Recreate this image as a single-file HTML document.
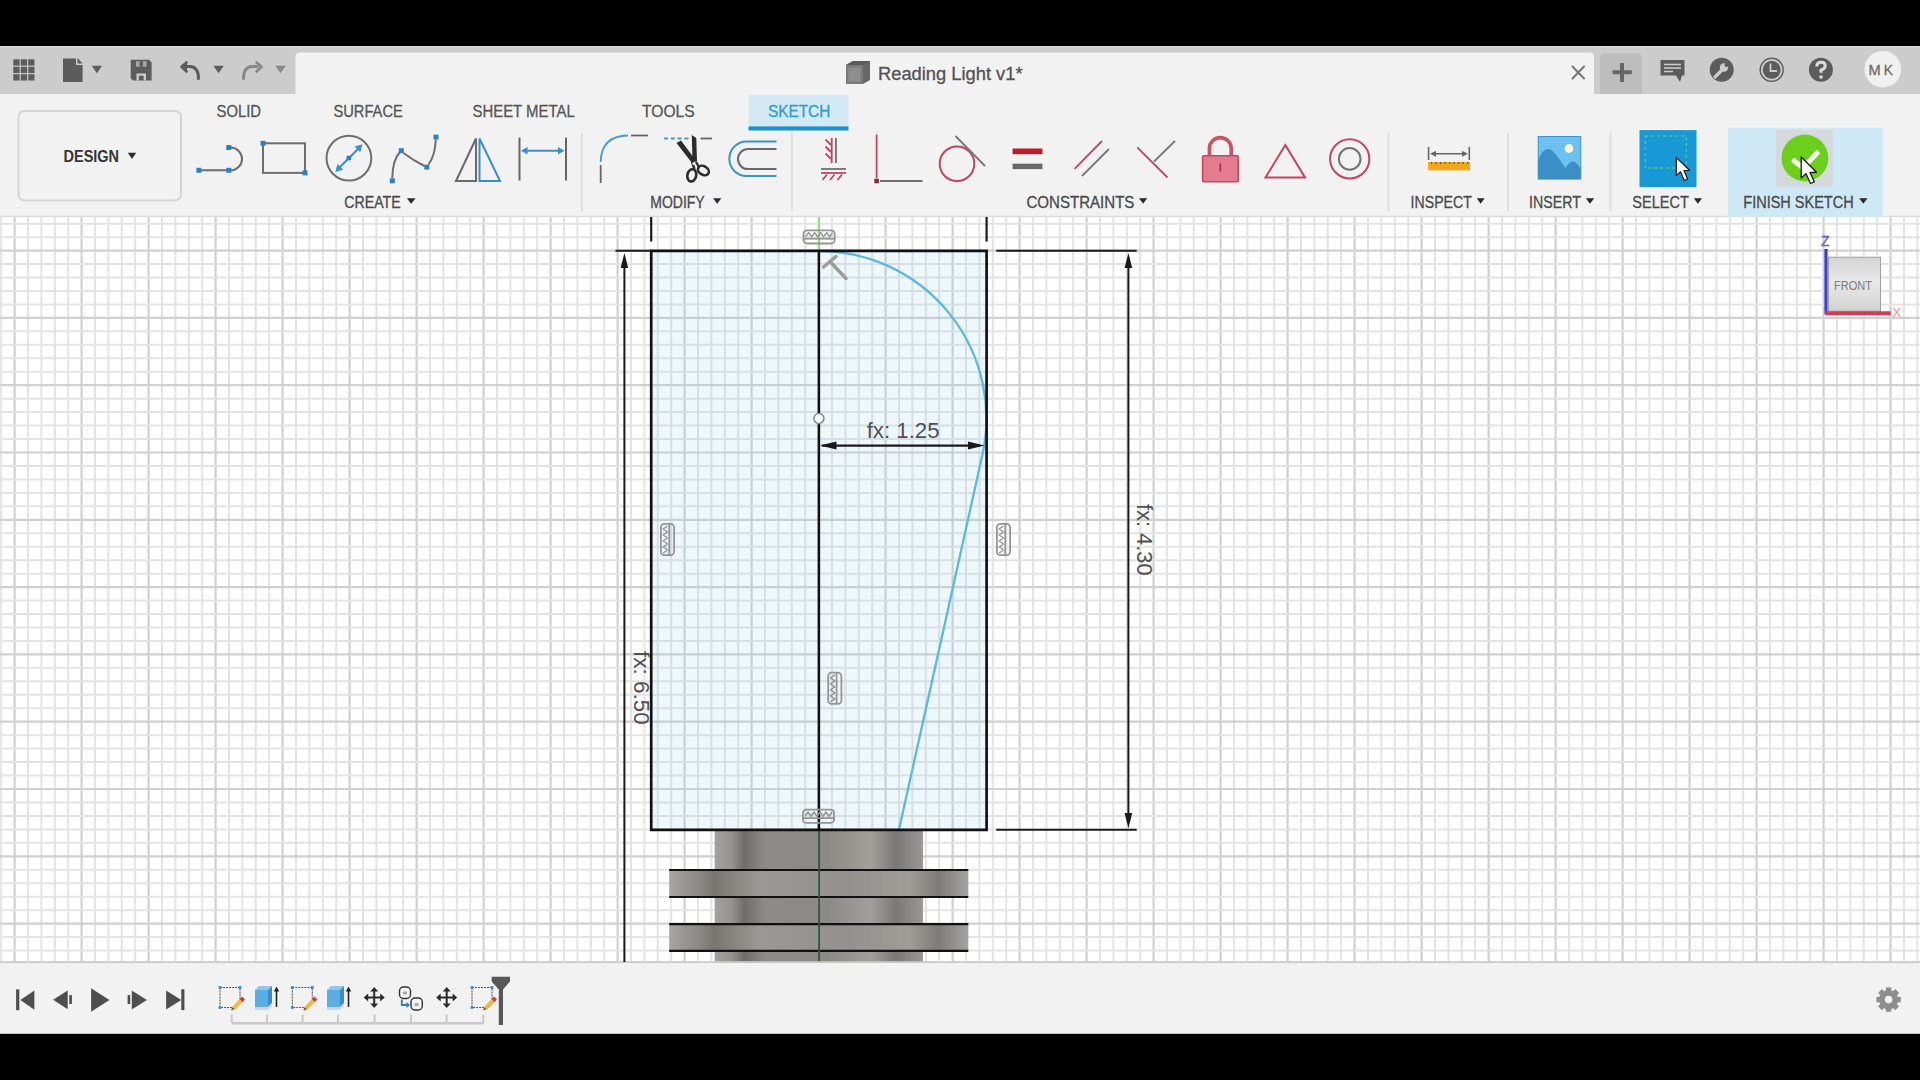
<!DOCTYPE html><html><head><meta charset="utf-8"><title>Fusion</title><style>html,body{margin:0;padding:0;width:1920px;height:1080px;overflow:hidden;background:#000}svg{display:block}text{font-family:"Liberation Sans",sans-serif}</style></head><body><svg width="1920" height="1080" viewBox="0 0 1920 1080"><defs><linearGradient id="gbody" x1="0" x2="1" y1="0" y2="0"><stop offset="0" stop-color="#a3a19d"/><stop offset="0.08" stop-color="#96948f"/><stop offset="0.14" stop-color="#6f6e6a"/><stop offset="0.24" stop-color="#8d8b87"/><stop offset="0.55" stop-color="#8c8a86"/><stop offset="0.75" stop-color="#a3a09b"/><stop offset="0.87" stop-color="#7a7975"/><stop offset="1" stop-color="#9a9894"/></linearGradient><linearGradient id="gring" x1="0" x2="1" y1="0" y2="0"><stop offset="0" stop-color="#a8a6a2"/><stop offset="0.1" stop-color="#8a8985"/><stop offset="0.15" stop-color="#77766f"/><stop offset="0.3" stop-color="#9a9894"/><stop offset="0.6" stop-color="#93918d"/><stop offset="0.8" stop-color="#a09d98"/><stop offset="0.9" stop-color="#7d7c78"/><stop offset="1" stop-color="#a5a39f"/></linearGradient><linearGradient id="gcube" x1="0" x2="0" y1="0" y2="1"><stop offset="0" stop-color="#d4d4d4"/><stop offset="0.45" stop-color="#e8e8e8"/><stop offset="1" stop-color="#d2d2d2"/></linearGradient></defs><rect x="0" y="0" width="1920" height="1080" fill="#f2f2f2"/><rect x="0" y="0" width="1920" height="46" fill="#000"/><rect x="0" y="46" width="1920" height="48" fill="#cccccc"/><rect x="0" y="46" width="1920" height="1.2" fill="#dadada"/><path d="M295.5,94 V57 Q295.5,52.5 300,52.5 H1589.5 Q1594,52.5 1594,57 V94 Z" fill="#f2f2f2"/><path d="M1600,94 V58 Q1600,53.5 1604.5,53.5 H1637.5 Q1642,53.5 1642,58 V94 Z" fill="#bdbdbd"/><rect x="0" y="215.8" width="1920" height="1.4" fill="#d9d9d9"/><rect x="0" y="217.2" width="1920" height="744.6" fill="#ffffff"/><line x1="1.20" y1="217.2" x2="1.20" y2="961.5" stroke="#e3e3e3" stroke-width="2.0"/><line x1="14.60" y1="217.2" x2="14.60" y2="961.5" stroke="#d0d0d0" stroke-width="2.2"/><line x1="28.00" y1="217.2" x2="28.00" y2="961.5" stroke="#e3e3e3" stroke-width="2.0"/><line x1="41.40" y1="217.2" x2="41.40" y2="961.5" stroke="#e3e3e3" stroke-width="2.0"/><line x1="54.80" y1="217.2" x2="54.80" y2="961.5" stroke="#e3e3e3" stroke-width="2.0"/><line x1="68.20" y1="217.2" x2="68.20" y2="961.5" stroke="#e3e3e3" stroke-width="2.0"/><line x1="81.60" y1="217.2" x2="81.60" y2="961.5" stroke="#d0d0d0" stroke-width="2.2"/><line x1="95.00" y1="217.2" x2="95.00" y2="961.5" stroke="#e3e3e3" stroke-width="2.0"/><line x1="108.40" y1="217.2" x2="108.40" y2="961.5" stroke="#e3e3e3" stroke-width="2.0"/><line x1="121.80" y1="217.2" x2="121.80" y2="961.5" stroke="#e3e3e3" stroke-width="2.0"/><line x1="135.20" y1="217.2" x2="135.20" y2="961.5" stroke="#e3e3e3" stroke-width="2.0"/><line x1="148.60" y1="217.2" x2="148.60" y2="961.5" stroke="#d0d0d0" stroke-width="2.2"/><line x1="162.00" y1="217.2" x2="162.00" y2="961.5" stroke="#e3e3e3" stroke-width="2.0"/><line x1="175.40" y1="217.2" x2="175.40" y2="961.5" stroke="#e3e3e3" stroke-width="2.0"/><line x1="188.80" y1="217.2" x2="188.80" y2="961.5" stroke="#e3e3e3" stroke-width="2.0"/><line x1="202.20" y1="217.2" x2="202.20" y2="961.5" stroke="#e3e3e3" stroke-width="2.0"/><line x1="215.60" y1="217.2" x2="215.60" y2="961.5" stroke="#d0d0d0" stroke-width="2.2"/><line x1="229.00" y1="217.2" x2="229.00" y2="961.5" stroke="#e3e3e3" stroke-width="2.0"/><line x1="242.40" y1="217.2" x2="242.40" y2="961.5" stroke="#e3e3e3" stroke-width="2.0"/><line x1="255.80" y1="217.2" x2="255.80" y2="961.5" stroke="#e3e3e3" stroke-width="2.0"/><line x1="269.20" y1="217.2" x2="269.20" y2="961.5" stroke="#e3e3e3" stroke-width="2.0"/><line x1="282.60" y1="217.2" x2="282.60" y2="961.5" stroke="#d0d0d0" stroke-width="2.2"/><line x1="296.00" y1="217.2" x2="296.00" y2="961.5" stroke="#e3e3e3" stroke-width="2.0"/><line x1="309.40" y1="217.2" x2="309.40" y2="961.5" stroke="#e3e3e3" stroke-width="2.0"/><line x1="322.80" y1="217.2" x2="322.80" y2="961.5" stroke="#e3e3e3" stroke-width="2.0"/><line x1="336.20" y1="217.2" x2="336.20" y2="961.5" stroke="#e3e3e3" stroke-width="2.0"/><line x1="349.60" y1="217.2" x2="349.60" y2="961.5" stroke="#d0d0d0" stroke-width="2.2"/><line x1="363.00" y1="217.2" x2="363.00" y2="961.5" stroke="#e3e3e3" stroke-width="2.0"/><line x1="376.40" y1="217.2" x2="376.40" y2="961.5" stroke="#e3e3e3" stroke-width="2.0"/><line x1="389.80" y1="217.2" x2="389.80" y2="961.5" stroke="#e3e3e3" stroke-width="2.0"/><line x1="403.20" y1="217.2" x2="403.20" y2="961.5" stroke="#e3e3e3" stroke-width="2.0"/><line x1="416.60" y1="217.2" x2="416.60" y2="961.5" stroke="#d0d0d0" stroke-width="2.2"/><line x1="430.00" y1="217.2" x2="430.00" y2="961.5" stroke="#e3e3e3" stroke-width="2.0"/><line x1="443.40" y1="217.2" x2="443.40" y2="961.5" stroke="#e3e3e3" stroke-width="2.0"/><line x1="456.80" y1="217.2" x2="456.80" y2="961.5" stroke="#e3e3e3" stroke-width="2.0"/><line x1="470.20" y1="217.2" x2="470.20" y2="961.5" stroke="#e3e3e3" stroke-width="2.0"/><line x1="483.60" y1="217.2" x2="483.60" y2="961.5" stroke="#d0d0d0" stroke-width="2.2"/><line x1="497.00" y1="217.2" x2="497.00" y2="961.5" stroke="#e3e3e3" stroke-width="2.0"/><line x1="510.40" y1="217.2" x2="510.40" y2="961.5" stroke="#e3e3e3" stroke-width="2.0"/><line x1="523.80" y1="217.2" x2="523.80" y2="961.5" stroke="#e3e3e3" stroke-width="2.0"/><line x1="537.20" y1="217.2" x2="537.20" y2="961.5" stroke="#e3e3e3" stroke-width="2.0"/><line x1="550.60" y1="217.2" x2="550.60" y2="961.5" stroke="#d0d0d0" stroke-width="2.2"/><line x1="564.00" y1="217.2" x2="564.00" y2="961.5" stroke="#e3e3e3" stroke-width="2.0"/><line x1="577.40" y1="217.2" x2="577.40" y2="961.5" stroke="#e3e3e3" stroke-width="2.0"/><line x1="590.80" y1="217.2" x2="590.80" y2="961.5" stroke="#e3e3e3" stroke-width="2.0"/><line x1="604.20" y1="217.2" x2="604.20" y2="961.5" stroke="#e3e3e3" stroke-width="2.0"/><line x1="617.60" y1="217.2" x2="617.60" y2="961.5" stroke="#d0d0d0" stroke-width="2.2"/><line x1="631.00" y1="217.2" x2="631.00" y2="961.5" stroke="#e3e3e3" stroke-width="2.0"/><line x1="644.40" y1="217.2" x2="644.40" y2="961.5" stroke="#e3e3e3" stroke-width="2.0"/><line x1="657.80" y1="217.2" x2="657.80" y2="961.5" stroke="#e3e3e3" stroke-width="2.0"/><line x1="671.20" y1="217.2" x2="671.20" y2="961.5" stroke="#e3e3e3" stroke-width="2.0"/><line x1="684.60" y1="217.2" x2="684.60" y2="961.5" stroke="#d0d0d0" stroke-width="2.2"/><line x1="698.00" y1="217.2" x2="698.00" y2="961.5" stroke="#e3e3e3" stroke-width="2.0"/><line x1="711.40" y1="217.2" x2="711.40" y2="961.5" stroke="#e3e3e3" stroke-width="2.0"/><line x1="724.80" y1="217.2" x2="724.80" y2="961.5" stroke="#e3e3e3" stroke-width="2.0"/><line x1="738.20" y1="217.2" x2="738.20" y2="961.5" stroke="#e3e3e3" stroke-width="2.0"/><line x1="751.60" y1="217.2" x2="751.60" y2="961.5" stroke="#d0d0d0" stroke-width="2.2"/><line x1="765.00" y1="217.2" x2="765.00" y2="961.5" stroke="#e3e3e3" stroke-width="2.0"/><line x1="778.40" y1="217.2" x2="778.40" y2="961.5" stroke="#e3e3e3" stroke-width="2.0"/><line x1="791.80" y1="217.2" x2="791.80" y2="961.5" stroke="#e3e3e3" stroke-width="2.0"/><line x1="805.20" y1="217.2" x2="805.20" y2="961.5" stroke="#e3e3e3" stroke-width="2.0"/><line x1="818.60" y1="217.2" x2="818.60" y2="961.5" stroke="#d0d0d0" stroke-width="2.2"/><line x1="832.00" y1="217.2" x2="832.00" y2="961.5" stroke="#e3e3e3" stroke-width="2.0"/><line x1="845.40" y1="217.2" x2="845.40" y2="961.5" stroke="#e3e3e3" stroke-width="2.0"/><line x1="858.80" y1="217.2" x2="858.80" y2="961.5" stroke="#e3e3e3" stroke-width="2.0"/><line x1="872.20" y1="217.2" x2="872.20" y2="961.5" stroke="#e3e3e3" stroke-width="2.0"/><line x1="885.60" y1="217.2" x2="885.60" y2="961.5" stroke="#d0d0d0" stroke-width="2.2"/><line x1="899.00" y1="217.2" x2="899.00" y2="961.5" stroke="#e3e3e3" stroke-width="2.0"/><line x1="912.40" y1="217.2" x2="912.40" y2="961.5" stroke="#e3e3e3" stroke-width="2.0"/><line x1="925.80" y1="217.2" x2="925.80" y2="961.5" stroke="#e3e3e3" stroke-width="2.0"/><line x1="939.20" y1="217.2" x2="939.20" y2="961.5" stroke="#e3e3e3" stroke-width="2.0"/><line x1="952.60" y1="217.2" x2="952.60" y2="961.5" stroke="#d0d0d0" stroke-width="2.2"/><line x1="966.00" y1="217.2" x2="966.00" y2="961.5" stroke="#e3e3e3" stroke-width="2.0"/><line x1="979.40" y1="217.2" x2="979.40" y2="961.5" stroke="#e3e3e3" stroke-width="2.0"/><line x1="992.80" y1="217.2" x2="992.80" y2="961.5" stroke="#e3e3e3" stroke-width="2.0"/><line x1="1006.20" y1="217.2" x2="1006.20" y2="961.5" stroke="#e3e3e3" stroke-width="2.0"/><line x1="1019.60" y1="217.2" x2="1019.60" y2="961.5" stroke="#d0d0d0" stroke-width="2.2"/><line x1="1033.00" y1="217.2" x2="1033.00" y2="961.5" stroke="#e3e3e3" stroke-width="2.0"/><line x1="1046.40" y1="217.2" x2="1046.40" y2="961.5" stroke="#e3e3e3" stroke-width="2.0"/><line x1="1059.80" y1="217.2" x2="1059.80" y2="961.5" stroke="#e3e3e3" stroke-width="2.0"/><line x1="1073.20" y1="217.2" x2="1073.20" y2="961.5" stroke="#e3e3e3" stroke-width="2.0"/><line x1="1086.60" y1="217.2" x2="1086.60" y2="961.5" stroke="#d0d0d0" stroke-width="2.2"/><line x1="1100.00" y1="217.2" x2="1100.00" y2="961.5" stroke="#e3e3e3" stroke-width="2.0"/><line x1="1113.40" y1="217.2" x2="1113.40" y2="961.5" stroke="#e3e3e3" stroke-width="2.0"/><line x1="1126.80" y1="217.2" x2="1126.80" y2="961.5" stroke="#e3e3e3" stroke-width="2.0"/><line x1="1140.20" y1="217.2" x2="1140.20" y2="961.5" stroke="#e3e3e3" stroke-width="2.0"/><line x1="1153.60" y1="217.2" x2="1153.60" y2="961.5" stroke="#d0d0d0" stroke-width="2.2"/><line x1="1167.00" y1="217.2" x2="1167.00" y2="961.5" stroke="#e3e3e3" stroke-width="2.0"/><line x1="1180.40" y1="217.2" x2="1180.40" y2="961.5" stroke="#e3e3e3" stroke-width="2.0"/><line x1="1193.80" y1="217.2" x2="1193.80" y2="961.5" stroke="#e3e3e3" stroke-width="2.0"/><line x1="1207.20" y1="217.2" x2="1207.20" y2="961.5" stroke="#e3e3e3" stroke-width="2.0"/><line x1="1220.60" y1="217.2" x2="1220.60" y2="961.5" stroke="#d0d0d0" stroke-width="2.2"/><line x1="1234.00" y1="217.2" x2="1234.00" y2="961.5" stroke="#e3e3e3" stroke-width="2.0"/><line x1="1247.40" y1="217.2" x2="1247.40" y2="961.5" stroke="#e3e3e3" stroke-width="2.0"/><line x1="1260.80" y1="217.2" x2="1260.80" y2="961.5" stroke="#e3e3e3" stroke-width="2.0"/><line x1="1274.20" y1="217.2" x2="1274.20" y2="961.5" stroke="#e3e3e3" stroke-width="2.0"/><line x1="1287.60" y1="217.2" x2="1287.60" y2="961.5" stroke="#d0d0d0" stroke-width="2.2"/><line x1="1301.00" y1="217.2" x2="1301.00" y2="961.5" stroke="#e3e3e3" stroke-width="2.0"/><line x1="1314.40" y1="217.2" x2="1314.40" y2="961.5" stroke="#e3e3e3" stroke-width="2.0"/><line x1="1327.80" y1="217.2" x2="1327.80" y2="961.5" stroke="#e3e3e3" stroke-width="2.0"/><line x1="1341.20" y1="217.2" x2="1341.20" y2="961.5" stroke="#e3e3e3" stroke-width="2.0"/><line x1="1354.60" y1="217.2" x2="1354.60" y2="961.5" stroke="#d0d0d0" stroke-width="2.2"/><line x1="1368.00" y1="217.2" x2="1368.00" y2="961.5" stroke="#e3e3e3" stroke-width="2.0"/><line x1="1381.40" y1="217.2" x2="1381.40" y2="961.5" stroke="#e3e3e3" stroke-width="2.0"/><line x1="1394.80" y1="217.2" x2="1394.80" y2="961.5" stroke="#e3e3e3" stroke-width="2.0"/><line x1="1408.20" y1="217.2" x2="1408.20" y2="961.5" stroke="#e3e3e3" stroke-width="2.0"/><line x1="1421.60" y1="217.2" x2="1421.60" y2="961.5" stroke="#d0d0d0" stroke-width="2.2"/><line x1="1435.00" y1="217.2" x2="1435.00" y2="961.5" stroke="#e3e3e3" stroke-width="2.0"/><line x1="1448.40" y1="217.2" x2="1448.40" y2="961.5" stroke="#e3e3e3" stroke-width="2.0"/><line x1="1461.80" y1="217.2" x2="1461.80" y2="961.5" stroke="#e3e3e3" stroke-width="2.0"/><line x1="1475.20" y1="217.2" x2="1475.20" y2="961.5" stroke="#e3e3e3" stroke-width="2.0"/><line x1="1488.60" y1="217.2" x2="1488.60" y2="961.5" stroke="#d0d0d0" stroke-width="2.2"/><line x1="1502.00" y1="217.2" x2="1502.00" y2="961.5" stroke="#e3e3e3" stroke-width="2.0"/><line x1="1515.40" y1="217.2" x2="1515.40" y2="961.5" stroke="#e3e3e3" stroke-width="2.0"/><line x1="1528.80" y1="217.2" x2="1528.80" y2="961.5" stroke="#e3e3e3" stroke-width="2.0"/><line x1="1542.20" y1="217.2" x2="1542.20" y2="961.5" stroke="#e3e3e3" stroke-width="2.0"/><line x1="1555.60" y1="217.2" x2="1555.60" y2="961.5" stroke="#d0d0d0" stroke-width="2.2"/><line x1="1569.00" y1="217.2" x2="1569.00" y2="961.5" stroke="#e3e3e3" stroke-width="2.0"/><line x1="1582.40" y1="217.2" x2="1582.40" y2="961.5" stroke="#e3e3e3" stroke-width="2.0"/><line x1="1595.80" y1="217.2" x2="1595.80" y2="961.5" stroke="#e3e3e3" stroke-width="2.0"/><line x1="1609.20" y1="217.2" x2="1609.20" y2="961.5" stroke="#e3e3e3" stroke-width="2.0"/><line x1="1622.60" y1="217.2" x2="1622.60" y2="961.5" stroke="#d0d0d0" stroke-width="2.2"/><line x1="1636.00" y1="217.2" x2="1636.00" y2="961.5" stroke="#e3e3e3" stroke-width="2.0"/><line x1="1649.40" y1="217.2" x2="1649.40" y2="961.5" stroke="#e3e3e3" stroke-width="2.0"/><line x1="1662.80" y1="217.2" x2="1662.80" y2="961.5" stroke="#e3e3e3" stroke-width="2.0"/><line x1="1676.20" y1="217.2" x2="1676.20" y2="961.5" stroke="#e3e3e3" stroke-width="2.0"/><line x1="1689.60" y1="217.2" x2="1689.60" y2="961.5" stroke="#d0d0d0" stroke-width="2.2"/><line x1="1703.00" y1="217.2" x2="1703.00" y2="961.5" stroke="#e3e3e3" stroke-width="2.0"/><line x1="1716.40" y1="217.2" x2="1716.40" y2="961.5" stroke="#e3e3e3" stroke-width="2.0"/><line x1="1729.80" y1="217.2" x2="1729.80" y2="961.5" stroke="#e3e3e3" stroke-width="2.0"/><line x1="1743.20" y1="217.2" x2="1743.20" y2="961.5" stroke="#e3e3e3" stroke-width="2.0"/><line x1="1756.60" y1="217.2" x2="1756.60" y2="961.5" stroke="#d0d0d0" stroke-width="2.2"/><line x1="1770.00" y1="217.2" x2="1770.00" y2="961.5" stroke="#e3e3e3" stroke-width="2.0"/><line x1="1783.40" y1="217.2" x2="1783.40" y2="961.5" stroke="#e3e3e3" stroke-width="2.0"/><line x1="1796.80" y1="217.2" x2="1796.80" y2="961.5" stroke="#e3e3e3" stroke-width="2.0"/><line x1="1810.20" y1="217.2" x2="1810.20" y2="961.5" stroke="#e3e3e3" stroke-width="2.0"/><line x1="1823.60" y1="217.2" x2="1823.60" y2="961.5" stroke="#d0d0d0" stroke-width="2.2"/><line x1="1837.00" y1="217.2" x2="1837.00" y2="961.5" stroke="#e3e3e3" stroke-width="2.0"/><line x1="1850.40" y1="217.2" x2="1850.40" y2="961.5" stroke="#e3e3e3" stroke-width="2.0"/><line x1="1863.80" y1="217.2" x2="1863.80" y2="961.5" stroke="#e3e3e3" stroke-width="2.0"/><line x1="1877.20" y1="217.2" x2="1877.20" y2="961.5" stroke="#e3e3e3" stroke-width="2.0"/><line x1="1890.60" y1="217.2" x2="1890.60" y2="961.5" stroke="#d0d0d0" stroke-width="2.2"/><line x1="1904.00" y1="217.2" x2="1904.00" y2="961.5" stroke="#e3e3e3" stroke-width="2.0"/><line x1="1917.40" y1="217.2" x2="1917.40" y2="961.5" stroke="#e3e3e3" stroke-width="2.0"/><line x1="0" y1="223.68" x2="1920" y2="223.68" stroke="#e3e3e3" stroke-width="2.0"/><line x1="0" y1="237.14" x2="1920" y2="237.14" stroke="#e3e3e3" stroke-width="2.0"/><line x1="0" y1="250.60" x2="1920" y2="250.60" stroke="#d0d0d0" stroke-width="2.2"/><line x1="0" y1="264.06" x2="1920" y2="264.06" stroke="#e3e3e3" stroke-width="2.0"/><line x1="0" y1="277.52" x2="1920" y2="277.52" stroke="#e3e3e3" stroke-width="2.0"/><line x1="0" y1="290.98" x2="1920" y2="290.98" stroke="#e3e3e3" stroke-width="2.0"/><line x1="0" y1="304.44" x2="1920" y2="304.44" stroke="#e3e3e3" stroke-width="2.0"/><line x1="0" y1="317.90" x2="1920" y2="317.90" stroke="#d0d0d0" stroke-width="2.2"/><line x1="0" y1="331.36" x2="1920" y2="331.36" stroke="#e3e3e3" stroke-width="2.0"/><line x1="0" y1="344.82" x2="1920" y2="344.82" stroke="#e3e3e3" stroke-width="2.0"/><line x1="0" y1="358.28" x2="1920" y2="358.28" stroke="#e3e3e3" stroke-width="2.0"/><line x1="0" y1="371.74" x2="1920" y2="371.74" stroke="#e3e3e3" stroke-width="2.0"/><line x1="0" y1="385.20" x2="1920" y2="385.20" stroke="#d0d0d0" stroke-width="2.2"/><line x1="0" y1="398.66" x2="1920" y2="398.66" stroke="#e3e3e3" stroke-width="2.0"/><line x1="0" y1="412.12" x2="1920" y2="412.12" stroke="#e3e3e3" stroke-width="2.0"/><line x1="0" y1="425.58" x2="1920" y2="425.58" stroke="#e3e3e3" stroke-width="2.0"/><line x1="0" y1="439.04" x2="1920" y2="439.04" stroke="#e3e3e3" stroke-width="2.0"/><line x1="0" y1="452.50" x2="1920" y2="452.50" stroke="#d0d0d0" stroke-width="2.2"/><line x1="0" y1="465.96" x2="1920" y2="465.96" stroke="#e3e3e3" stroke-width="2.0"/><line x1="0" y1="479.42" x2="1920" y2="479.42" stroke="#e3e3e3" stroke-width="2.0"/><line x1="0" y1="492.88" x2="1920" y2="492.88" stroke="#e3e3e3" stroke-width="2.0"/><line x1="0" y1="506.34" x2="1920" y2="506.34" stroke="#e3e3e3" stroke-width="2.0"/><line x1="0" y1="519.80" x2="1920" y2="519.80" stroke="#d0d0d0" stroke-width="2.2"/><line x1="0" y1="533.26" x2="1920" y2="533.26" stroke="#e3e3e3" stroke-width="2.0"/><line x1="0" y1="546.72" x2="1920" y2="546.72" stroke="#e3e3e3" stroke-width="2.0"/><line x1="0" y1="560.18" x2="1920" y2="560.18" stroke="#e3e3e3" stroke-width="2.0"/><line x1="0" y1="573.64" x2="1920" y2="573.64" stroke="#e3e3e3" stroke-width="2.0"/><line x1="0" y1="587.10" x2="1920" y2="587.10" stroke="#d0d0d0" stroke-width="2.2"/><line x1="0" y1="600.56" x2="1920" y2="600.56" stroke="#e3e3e3" stroke-width="2.0"/><line x1="0" y1="614.02" x2="1920" y2="614.02" stroke="#e3e3e3" stroke-width="2.0"/><line x1="0" y1="627.48" x2="1920" y2="627.48" stroke="#e3e3e3" stroke-width="2.0"/><line x1="0" y1="640.94" x2="1920" y2="640.94" stroke="#e3e3e3" stroke-width="2.0"/><line x1="0" y1="654.40" x2="1920" y2="654.40" stroke="#d0d0d0" stroke-width="2.2"/><line x1="0" y1="667.86" x2="1920" y2="667.86" stroke="#e3e3e3" stroke-width="2.0"/><line x1="0" y1="681.32" x2="1920" y2="681.32" stroke="#e3e3e3" stroke-width="2.0"/><line x1="0" y1="694.78" x2="1920" y2="694.78" stroke="#e3e3e3" stroke-width="2.0"/><line x1="0" y1="708.24" x2="1920" y2="708.24" stroke="#e3e3e3" stroke-width="2.0"/><line x1="0" y1="721.70" x2="1920" y2="721.70" stroke="#d0d0d0" stroke-width="2.2"/><line x1="0" y1="735.16" x2="1920" y2="735.16" stroke="#e3e3e3" stroke-width="2.0"/><line x1="0" y1="748.62" x2="1920" y2="748.62" stroke="#e3e3e3" stroke-width="2.0"/><line x1="0" y1="762.08" x2="1920" y2="762.08" stroke="#e3e3e3" stroke-width="2.0"/><line x1="0" y1="775.54" x2="1920" y2="775.54" stroke="#e3e3e3" stroke-width="2.0"/><line x1="0" y1="789.00" x2="1920" y2="789.00" stroke="#d0d0d0" stroke-width="2.2"/><line x1="0" y1="802.46" x2="1920" y2="802.46" stroke="#e3e3e3" stroke-width="2.0"/><line x1="0" y1="815.92" x2="1920" y2="815.92" stroke="#e3e3e3" stroke-width="2.0"/><line x1="0" y1="829.38" x2="1920" y2="829.38" stroke="#e3e3e3" stroke-width="2.0"/><line x1="0" y1="842.84" x2="1920" y2="842.84" stroke="#e3e3e3" stroke-width="2.0"/><line x1="0" y1="856.30" x2="1920" y2="856.30" stroke="#d0d0d0" stroke-width="2.2"/><line x1="0" y1="869.76" x2="1920" y2="869.76" stroke="#e3e3e3" stroke-width="2.0"/><line x1="0" y1="883.22" x2="1920" y2="883.22" stroke="#e3e3e3" stroke-width="2.0"/><line x1="0" y1="896.68" x2="1920" y2="896.68" stroke="#e3e3e3" stroke-width="2.0"/><line x1="0" y1="910.14" x2="1920" y2="910.14" stroke="#e3e3e3" stroke-width="2.0"/><line x1="0" y1="923.60" x2="1920" y2="923.60" stroke="#d0d0d0" stroke-width="2.2"/><line x1="0" y1="937.06" x2="1920" y2="937.06" stroke="#e3e3e3" stroke-width="2.0"/><line x1="0" y1="950.52" x2="1920" y2="950.52" stroke="#e3e3e3" stroke-width="2.0"/><rect x="0" y="961.2" width="1920" height="2" fill="#c9c9c9"/><rect x="0" y="963.2" width="1920" height="70.6" fill="#f2f2f2"/><rect x="0" y="1033.8" width="1920" height="46.2" fill="#000"/><rect x="651.2" y="250.8" width="335.4" height="579.0" fill="rgb(150,205,235)" fill-opacity="0.16"/><rect x="714.7" y="829.7" width="208.3" height="131.6" fill="url(#gbody)"/><rect x="669.2" y="870" width="299.1" height="27" fill="url(#gring)"/><rect x="669.2" y="924.2" width="299.1" height="26.6" fill="url(#gring)"/><line x1="669.2" y1="870.0" x2="968.3" y2="870.0" stroke="#111" stroke-width="2.2"/><line x1="669.2" y1="897.0" x2="968.3" y2="897.0" stroke="#111" stroke-width="2.2"/><line x1="669.2" y1="924.2" x2="968.3" y2="924.2" stroke="#111" stroke-width="2.2"/><line x1="669.2" y1="950.8" x2="968.3" y2="950.8" stroke="#111" stroke-width="2.2"/><line x1="819.1" y1="217.2" x2="819.1" y2="250" stroke="#8fe07a" stroke-width="2"/><line x1="819.1" y1="830" x2="819.1" y2="961" stroke="#2f5a2f" stroke-width="1.8"/><path d="M818.9,251.0 A167.5,167.5 0 0 1 982.30,455.32 L899,829.6" fill="none" stroke="#5bb8de" stroke-width="2.3"/><path d="M651.2,250.8 H986.6 V829.8 H651.2 Z" fill="none" stroke="#111" stroke-width="2.7"/><line x1="818.9" y1="250.8" x2="818.9" y2="829.8" stroke="#111" stroke-width="2.5"/><line x1="651.2" y1="217" x2="651.2" y2="241.5" stroke="#1a1a1a" stroke-width="2.2"/><line x1="986.6" y1="217" x2="986.6" y2="241.5" stroke="#1a1a1a" stroke-width="2.2"/><line x1="615.5" y1="250.8" x2="651" y2="250.8" stroke="#1a1a1a" stroke-width="2"/><line x1="996.3" y1="250.8" x2="1136.7" y2="250.8" stroke="#1a1a1a" stroke-width="2"/><line x1="996.3" y1="829.75" x2="1136.7" y2="829.75" stroke="#1a1a1a" stroke-width="2.2"/><line x1="624.4" y1="258" x2="624.4" y2="962" stroke="#1a1a1a" stroke-width="2"/><path d="M624.4,253 L628.2,268 L620.6,268 Z" fill="#1a1a1a"/><line x1="1128.4" y1="258" x2="1128.4" y2="822" stroke="#1a1a1a" stroke-width="2"/><path d="M1128.4,253 L1132.2,268 L1124.6,268 Z" fill="#1a1a1a"/><path d="M1128.4,828.5 L1132.2,813 L1124.6,813 Z" fill="#1a1a1a"/><line x1="822" y1="445.6" x2="980" y2="445.6" stroke="#1a1a1a" stroke-width="2.1"/><path d="M820,445.6 L836.5,441.6 L836.5,449.6 Z" fill="#1a1a1a"/><path d="M984.5,445.6 L968,441.6 L968,449.6 Z" fill="#1a1a1a"/><text x="866.7" y="437.6" font-size="22" fill="#505050" textLength="72.8" lengthAdjust="spacingAndGlyphs">fx: 1.25</text><text transform="translate(633.6,651) rotate(90)" x="0" y="0" font-size="22" fill="#505050" textLength="73.7" lengthAdjust="spacingAndGlyphs">fx: 6.50</text><text transform="translate(1137.2,504) rotate(90)" x="0" y="0" font-size="22" fill="#505050" textLength="71.6" lengthAdjust="spacingAndGlyphs">fx: 4.30</text><circle cx="818.9" cy="418.5" r="5" fill="#fff" stroke="#8a8a8a" stroke-width="1.6"/><g stroke="#9c9c9c" stroke-linecap="round" fill="none"><line x1="823.5" y1="267" x2="836" y2="256.5" stroke-width="3.4"/><line x1="830" y1="261.5" x2="846" y2="278.5" stroke-width="3.4"/></g><g fill="none" stroke="#959595" stroke-width="1.8" stroke-linejoin="round"><rect x="803.5" y="230.3" width="31.2" height="13.2" rx="3.5"/><line x1="803.6" y1="238.7" x2="834.6" y2="238.7"/><path d="M805.6,236.9 L808.6,232.6 L811.6,236.9 L814.6,232.6 L817.6,236.9 L820.6,232.6 L823.6,236.9 L826.6,232.6 L829.6,236.9 L832.6,232.6" stroke-width="1.5"/></g><g fill="none" stroke="#959595" stroke-width="1.8" stroke-linejoin="round"><rect x="802.9" y="809.7" width="31.2" height="13.2" rx="3.5"/><line x1="803.0" y1="818.1" x2="834.0" y2="818.1"/><path d="M805.0,816.3 L808.0,812.0 L811.0,816.3 L814.0,812.0 L817.0,816.3 L820.0,812.0 L823.0,816.3 L826.0,812.0 L829.0,816.3 L832.0,812.0" stroke-width="1.5"/></g><g fill="none" stroke="#959595" stroke-width="1.8" stroke-linejoin="round"><rect x="660.9" y="523.9" width="13.2" height="31.2" rx="3.5"/><line x1="669.3" y1="524.0" x2="669.3" y2="555.0"/><path d="M667.5,526.0 L663.2,529.0 L667.5,532.0 L663.2,535.0 L667.5,538.0 L663.2,541.0 L667.5,544.0 L663.2,547.0 L667.5,550.0 L663.2,553.0" stroke-width="1.5"/></g><g fill="none" stroke="#959595" stroke-width="1.8" stroke-linejoin="round"><rect x="996.9" y="523.9" width="13.2" height="31.2" rx="3.5"/><line x1="1005.3" y1="524.0" x2="1005.3" y2="555.0"/><path d="M1003.5,526.0 L999.2,529.0 L1003.5,532.0 L999.2,535.0 L1003.5,538.0 L999.2,541.0 L1003.5,544.0 L999.2,547.0 L1003.5,550.0 L999.2,553.0" stroke-width="1.5"/></g><g fill="none" stroke="#959595" stroke-width="1.8" stroke-linejoin="round"><rect x="828.2" y="672.7" width="13.2" height="31.2" rx="3.5"/><line x1="836.6" y1="672.8" x2="836.6" y2="703.8"/><path d="M834.8,674.8 L830.5,677.8 L834.8,680.8 L830.5,683.8 L834.8,686.8 L830.5,689.8 L834.8,692.8 L830.5,695.8 L834.8,698.8 L830.5,701.8" stroke-width="1.5"/></g><rect x="1828.5" y="257.2" width="52" height="54" fill="url(#gcube)" stroke="#a0a0a0" stroke-width="1"/><text x="1834" y="290" font-size="13.6" fill="#7c7c7c" textLength="38" lengthAdjust="spacingAndGlyphs">FRONT</text><line x1="1826" y1="249" x2="1826" y2="314" stroke="#3d3dd6" stroke-width="3.2"/><line x1="1825" y1="313.2" x2="1890.7" y2="313.2" stroke="#d23c52" stroke-width="4"/><text x="1821.3" y="246.2" font-size="15" fill="#6464cc" textLength="8.2" lengthAdjust="spacingAndGlyphs" stroke="#6464cc" stroke-width="0.5">Z</text><text x="1892.3" y="317.2" font-size="13" fill="#ee8fa0" textLength="8.8" lengthAdjust="spacingAndGlyphs">X</text><rect x="13.30" y="59.30" width="6.3" height="6.3" fill="#5c5c5c"/><rect x="13.30" y="66.75" width="6.3" height="6.3" fill="#5c5c5c"/><rect x="13.30" y="74.20" width="6.3" height="6.3" fill="#5c5c5c"/><rect x="20.75" y="59.30" width="6.3" height="6.3" fill="#5c5c5c"/><rect x="20.75" y="66.75" width="6.3" height="6.3" fill="#5c5c5c"/><rect x="20.75" y="74.20" width="6.3" height="6.3" fill="#5c5c5c"/><rect x="28.20" y="59.30" width="6.3" height="6.3" fill="#5c5c5c"/><rect x="28.20" y="66.75" width="6.3" height="6.3" fill="#5c5c5c"/><rect x="28.20" y="74.20" width="6.3" height="6.3" fill="#5c5c5c"/><path d="M63,58.5 H76 V65 H82.6 V82 H63 Z" fill="#5c5c5c"/><path d="M77.5,58 L82.6,63.4 H77.5 Z" fill="#5c5c5c"/><path d="M91.8,65.8 H102.0 L96.9,73.2 Z" fill="#5c5c5c"/><path d="M130.7,59.8 H149 L151.6,62.4 V80.6 H133 L130.7,78.3 Z" fill="#5c5c5c"/><rect x="136" y="61.2" width="10.5" height="5.5" fill="#a8a8a8"/><rect x="139.5" y="61.2" width="3.5" height="5.5" fill="#5c5c5c"/><path d="M136.5,80.6 V73.5 H146 V80.6 H143.6 V75.8 H138.9 V80.6 Z" fill="#cccccc"/><path d="M185,66.5 H190 Q198.5,67 198.5,78.5" fill="none" stroke="#5c5c5c" stroke-width="3" stroke-linecap="round"/><path d="M180.5,66.8 L187,61.5 L187,72 Z" fill="#5c5c5c"/><path d="M181.5,66.8 L186.5,62.5 M181.5,66.8 L186.5,71.5" stroke="#5c5c5c" stroke-width="2.6" stroke-linecap="round"/><path d="M213.4,65.8 H223.8 L218.6,73.2 Z" fill="#5c5c5c"/><path d="M257,66.5 H252 Q243.5,67 243.5,78.5" fill="none" stroke="#888888" stroke-width="3" stroke-linecap="round"/><path d="M261.5,66.8 L256.5,62.5 M261.5,66.8 L256.5,71.5" stroke="#888888" stroke-width="2.6" stroke-linecap="round"/><path d="M275.3,65.8 H285.8 L280.6,73.2 Z" fill="#888888"/><path d="M846,65 L853,61 H870 V80 L863,84 H846 Z" fill="#666"/><path d="M846,65 H863 V84 H846 Z" fill="#7a7a7a"/><rect x="848.5" y="67.5" width="12" height="14" fill="#8e8e8e"/><path d="M846,65 L853,61 H870 L863,65 Z" fill="#5a5a5a"/><text x="878.0" y="80.3" font-size="18.6" fill="#525252" textLength="144.6" lengthAdjust="spacingAndGlyphs" stroke="#525252" stroke-width="0.3">Reading Light v1*</text><path d="M1572.5,66.5 L1584,78.5 M1584,66.5 L1572.5,78.5" stroke="#757575" stroke-width="2" stroke-linecap="round"/><path d="M1622,63 V82 M1612.5,72.3 H1631.8" stroke="#666" stroke-width="4"/><path d="M1660.5,60 H1684.5 V75.5 H1682 L1680,82 L1676,75.5 H1660.5 Z" fill="#5c5c5c"/><path d="M1664,64.5 H1681 M1664,68 H1681 M1664,71.5 H1673" stroke="#cfcfcf" stroke-width="1.5"/><circle cx="1721.7" cy="69.8" r="12" fill="#5c5c5c"/><path d="M1715,77 L1722,70" stroke="#cccccc" stroke-width="3.2" stroke-linecap="round"/><circle cx="1724" cy="67.5" r="4.2" fill="#cccccc"/><circle cx="1726.5" cy="65" r="2" fill="#5c5c5c"/><circle cx="1771.7" cy="69.8" r="11.5" fill="none" stroke="#5c5c5c" stroke-width="1.5"/><circle cx="1771.7" cy="69.8" r="9" fill="#5c5c5c"/><path d="M1770.5,63.5 V71 H1777" fill="none" stroke="#cccccc" stroke-width="1.8"/><circle cx="1820.9" cy="69.8" r="12" fill="#5c5c5c"/><path d="M1816.8,66.5 Q1816.8,62.3 1821,62.3 Q1825.2,62.3 1825.2,66 Q1825.2,68.5 1821,70.2 V72.8" fill="none" stroke="#dddddd" stroke-width="3"/><circle cx="1821" cy="77" r="1.8" fill="#dddddd"/><circle cx="1882.8" cy="69.2" r="18.3" fill="#f0f0f0"/><text x="1868.6" y="75.4" font-size="15.4" fill="#6a6a6a" textLength="12.2" lengthAdjust="spacingAndGlyphs" stroke="#6a6a6a" stroke-width="0.3">M</text><text x="1883.8" y="75.4" font-size="15.4" fill="#6a6a6a" textLength="9.2" lengthAdjust="spacingAndGlyphs" stroke="#6a6a6a" stroke-width="0.3">K</text><rect x="18.5" y="111" width="162.5" height="89.5" rx="6" fill="#f2f2f2" stroke="#d5d5d5" stroke-width="2"/><text x="63.5" y="162.3" font-size="16.5" fill="#353535" textLength="55.6" lengthAdjust="spacingAndGlyphs" font-weight="bold">DESIGN</text><path d="M127.8,152.8 H136.2 L132.0,158.9 Z" fill="#2e2e2e"/><text x="216.6" y="117.0" font-size="16.4" fill="#555555" textLength="44.4" lengthAdjust="spacingAndGlyphs" stroke="#555555" stroke-width="0.3">SOLID</text><text x="333.4" y="117.0" font-size="16.4" fill="#555555" textLength="69.4" lengthAdjust="spacingAndGlyphs" stroke="#555555" stroke-width="0.3">SURFACE</text><text x="472.5" y="117.0" font-size="16.4" fill="#555555" textLength="102.2" lengthAdjust="spacingAndGlyphs" stroke="#555555" stroke-width="0.3">SHEET METAL</text><text x="642.0" y="117.0" font-size="16.4" fill="#555555" textLength="52.6" lengthAdjust="spacingAndGlyphs" stroke="#555555" stroke-width="0.3">TOOLS</text><rect x="748.5" y="95" width="100" height="35.5" fill="#d3e9f5"/><rect x="748.5" y="126.4" width="100" height="4.1" fill="#1d92c9"/><text x="768.0" y="117.0" font-size="16.4" fill="#2f9ad2" textLength="62.3" lengthAdjust="spacingAndGlyphs" stroke="#2f9ad2" stroke-width="0.3">SKETCH</text><text x="344.3" y="208.4" font-size="15.6" fill="#4a4a4a" textLength="56.3" lengthAdjust="spacingAndGlyphs" stroke="#4a4a4a" stroke-width="0.3">CREATE</text><path d="M406.8,198.3 H415.6 L411.2,203.8 Z" fill="#2a2a2a"/><text x="650.3" y="208.4" font-size="15.6" fill="#4a4a4a" textLength="54.4" lengthAdjust="spacingAndGlyphs" stroke="#4a4a4a" stroke-width="0.3">MODIFY</text><path d="M713.1,198.3 H721.3 L717.2,203.8 Z" fill="#2a2a2a"/><text x="1026.4" y="208.4" font-size="15.6" fill="#4a4a4a" textLength="108.0" lengthAdjust="spacingAndGlyphs" stroke="#4a4a4a" stroke-width="0.3">CONSTRAINTS</text><path d="M1139.0,198.3 H1147.2 L1143.1,203.8 Z" fill="#2a2a2a"/><text x="1410.6" y="208.4" font-size="15.6" fill="#4a4a4a" textLength="61.2" lengthAdjust="spacingAndGlyphs" stroke="#4a4a4a" stroke-width="0.3">INSPECT</text><path d="M1476.8,198.3 H1484.6 L1480.7,203.8 Z" fill="#2a2a2a"/><text x="1529.1" y="208.4" font-size="15.6" fill="#4a4a4a" textLength="51.7" lengthAdjust="spacingAndGlyphs" stroke="#4a4a4a" stroke-width="0.3">INSERT</text><path d="M1585.8,198.3 H1594.2 L1590.0,203.8 Z" fill="#2a2a2a"/><rect x="1727.8" y="127.8" width="154.9" height="89.2" fill="#cfe8f6"/><text x="1632.3" y="208.4" font-size="15.6" fill="#4a4a4a" textLength="56.6" lengthAdjust="spacingAndGlyphs" stroke="#4a4a4a" stroke-width="0.3">SELECT</text><path d="M1693.8,198.3 H1702.1 L1697.9,203.8 Z" fill="#2a2a2a"/><text x="1743.3" y="208.4" font-size="15.6" fill="#4a4a4a" textLength="110.3" lengthAdjust="spacingAndGlyphs" stroke="#4a4a4a" stroke-width="0.3">FINISH SKETCH</text><path d="M1859.2,198.3 H1867.5 L1863.3,203.8 Z" fill="#2a2a2a"/><line x1="581.9" y1="133" x2="581.9" y2="211" stroke="#dedede" stroke-width="2"/><line x1="791.9" y1="133" x2="791.9" y2="211" stroke="#dedede" stroke-width="2"/><line x1="1388.6" y1="133" x2="1388.6" y2="211" stroke="#dedede" stroke-width="2"/><line x1="1508.0" y1="133" x2="1508.0" y2="211" stroke="#dedede" stroke-width="2"/><line x1="1610.4" y1="133" x2="1610.4" y2="211" stroke="#dedede" stroke-width="2"/><path d="M199,170.3 H229 M230.5,147.6 A11.5,11.35 0 0 1 230.5,170.3" fill="none" stroke="#6e6e6e" stroke-width="2"/><rect x="196.4" y="167.8" width="5.0" height="5.0" fill="#2c80c2"/><rect x="226.3" y="167.8" width="5.0" height="5.0" fill="#2c80c2"/><rect x="226.3" y="145.0" width="5.0" height="5.0" fill="#2c80c2"/><rect x="263" y="143.3" width="42" height="29.6" fill="none" stroke="#6e6e6e" stroke-width="2"/><rect x="260.5" y="140.8" width="5.0" height="5.0" fill="#2c80c2"/><rect x="302.5" y="170.4" width="5.0" height="5.0" fill="#2c80c2"/><circle cx="348.9" cy="158.1" r="22.4" fill="none" stroke="#6e6e6e" stroke-width="2"/><path d="M338,169 L360,147" stroke="#3a92d0" stroke-width="2.2"/><path d="M362.5,144.3 L354.5,146.5 L360.3,152.3 Z M335.3,171.9 L343.3,169.7 L337.5,163.9 Z" fill="#3a92d0"/><rect x="346.6" y="155.8" width="4.5" height="4.5" fill="#2c80c2"/><path d="M392.3,178 Q392.5,160 400,152 M403.5,153 Q414,161 424.5,166 M428.5,164.5 Q435,156 435.8,140" fill="none" stroke="#6e6e6e" stroke-width="2"/><rect x="389.8" y="178.3" width="5.0" height="5.0" fill="#2c80c2"/><rect x="398.8" y="148.2" width="5.0" height="5.0" fill="#2c80c2"/><rect x="424.3" y="164.6" width="5.0" height="5.0" fill="#2c80c2"/><rect x="433.5" y="134.6" width="5.0" height="5.0" fill="#2c80c2"/><path d="M456,181 L476,138.5 V181 Z" fill="none" stroke="#6a6a6a" stroke-width="2" stroke-linejoin="miter"/><path d="M479.5,138.5 V181 H500 Z" fill="none" stroke="#3a8fc8" stroke-width="2"/><path d="M519.5,137.5 V180.5 M566,137.5 V180.5" stroke="#666" stroke-width="2"/><path d="M525,150.7 H560" stroke="#3a8fc8" stroke-width="2"/><path d="M521,150.7 L527.5,147 V154.4 Z M564.5,150.7 L558,147 V154.4 Z" fill="#3a8fc8"/><path d="M600.7,165 V183" stroke="#666" stroke-width="1.8"/><path d="M600.7,162 Q601,136 628,135.5" fill="none" stroke="#4a9ad0" stroke-width="1.8"/><path d="M631,135.5 H648" stroke="#666" stroke-width="1.8"/><path d="M664,138.5 H689" stroke="#4a9ad0" stroke-width="1.8" stroke-dasharray="4,2.8"/><path d="M700.5,138.5 H712" stroke="#666" stroke-width="1.8"/><path d="M676.5,143 L681,140.5 L695.5,160 L692,163 Z" fill="#2c2c2c"/><path d="M691.8,135 L696.3,138 L697,161.5 L692.5,162 Z" fill="#2c2c2c"/><ellipse cx="691.8" cy="175.3" rx="4.4" ry="6.2" transform="rotate(12 691.8 175.3)" fill="none" stroke="#2c2c2c" stroke-width="2.6"/><ellipse cx="703.4" cy="170.5" rx="5.8" ry="4.3" transform="rotate(30 703.4 170.5)" fill="none" stroke="#2c2c2c" stroke-width="2.6"/><path d="M692,162 L694.5,169 M696,162 L699,167" stroke="#2c2c2c" stroke-width="2.4"/><circle cx="693.6" cy="163.7" r="1.3" fill="#f2f2f2"/><path d="M776.5,141.6 H746.5 A17.2,17.2 0 0 0 746.5,176 H776.5" fill="none" stroke="#3a92d0" stroke-width="2"/><path d="M776.5,149.1 H748 A10,10 0 0 0 748,169.1 H776.5" fill="none" stroke="#6a6a6a" stroke-width="2"/><path d="M831.7,138 V163" stroke="#c44460" stroke-width="1.8"/><path d="M836,138 V163" stroke="#707070" stroke-width="1.8"/><path d="M825.5,139.5 L831,145 M825.5,146.5 L831,152 M825.5,153.5 L831,159" stroke="#c44460" stroke-width="1.8"/><path d="M821,169 H846" stroke="#707070" stroke-width="1.8"/><path d="M821,173 H846" stroke="#c44460" stroke-width="1.8"/><path d="M822.5,180 L827,174.5 M830,180 L834.5,174.5 M837.5,180 L842,174.5" stroke="#c44460" stroke-width="1.8"/><path d="M876.6,134.5 V178" stroke="#c44460" stroke-width="1.8"/><rect x="874.3" y="178.7" width="4.6" height="4.6" fill="#8a2838"/><path d="M880,181 H922.5" stroke="#707070" stroke-width="1.8"/><circle cx="957" cy="163.8" r="17.3" fill="none" stroke="#c44460" stroke-width="2"/><path d="M955.5,136 L985,166" stroke="#777" stroke-width="1.8"/><rect x="1012.6" y="148.5" width="29.8" height="5.7" fill="#c0192e"/><rect x="1012.6" y="163.7" width="29.8" height="5.4" fill="#686868"/><path d="M1074.6,168.8 L1102,141" stroke="#c44460" stroke-width="1.8"/><path d="M1082,176 L1109,149" stroke="#777" stroke-width="1.8"/><path d="M1137.3,147.4 L1167.5,177.5" stroke="#c44460" stroke-width="1.8"/><path d="M1154,161.5 L1175,141" stroke="#777" stroke-width="1.8"/><path d="M1209.4,156 V148.5 A10.9,10.9 0 0 1 1231.2,148.5 V156" fill="none" stroke="#cc5266" stroke-width="3.6"/><rect x="1202.6" y="155.8" width="35.6" height="26" rx="1" fill="#e27c8e" stroke="#c44a5e" stroke-width="1.6"/><path d="M1220.3,163.5 V171.5" stroke="#a02c40" stroke-width="1.6"/><path d="M1285.3,145 L1265.5,177.6 H1305 Z" fill="none" stroke="#c44460" stroke-width="2" stroke-linejoin="miter"/><circle cx="1349.7" cy="158.9" r="19.6" fill="none" stroke="#c44460" stroke-width="2"/><circle cx="1349.7" cy="158.9" r="10.8" fill="none" stroke="#727272" stroke-width="2"/><path d="M1428.6,147 V160 M1469.3,147 V160" stroke="#666" stroke-width="1.6"/><path d="M1432,153.8 H1466" stroke="#666" stroke-width="1.6"/><path d="M1430,153.8 L1436,150.8 V156.8 Z M1468,153.8 L1462,150.8 V156.8 Z" fill="#666"/><rect x="1428.2" y="162" width="41.8" height="8.4" fill="#f1a81a"/><rect x="1431.0" y="162" width="1.2" height="2" fill="#6a4a10"/><rect x="1435.5" y="162" width="1.2" height="2" fill="#6a4a10"/><rect x="1440.0" y="162" width="1.2" height="2" fill="#6a4a10"/><rect x="1444.5" y="162" width="1.2" height="2" fill="#6a4a10"/><rect x="1449.0" y="162" width="1.2" height="2" fill="#6a4a10"/><rect x="1453.5" y="162" width="1.2" height="2" fill="#6a4a10"/><rect x="1458.0" y="162" width="1.2" height="2" fill="#6a4a10"/><rect x="1462.5" y="162" width="1.2" height="2" fill="#6a4a10"/><rect x="1467.0" y="162" width="1.2" height="2" fill="#6a4a10"/><rect x="1538.2" y="136.5" width="42.6" height="42.6" fill="#6cc1f0" stroke="#3f93cb" stroke-width="1"/><path d="M1538.2,179.1 V160 Q1544,145.5 1551.5,150 Q1556,153.5 1565.5,168 Q1569.5,161 1573.5,161.5 Q1578.5,163 1580.8,170 V179.1 Z" fill="#3b8fc6"/><circle cx="1569" cy="148.5" r="4.4" fill="#fbf8d2"/><rect x="1639.5" y="130.1" width="57" height="57" fill="#1899d6"/><rect x="1645.3" y="136" width="41" height="32" fill="none" stroke="#56c08a" stroke-width="1.4" stroke-dasharray="3,3"/><path d="M1676.3,157.5 V175.5 L1680.5,171.8 L1684.3,180.5 L1687.6,179 L1684,170.5 L1689.6,170.3 Z" fill="#fff" stroke="#1a1a1a" stroke-width="1.2" stroke-linejoin="round"/><rect x="1776" y="130" width="56.8" height="56.8" fill="#d6d9db"/><circle cx="1804.9" cy="158" r="23.4" fill="#6ccf1c"/><path d="M1792.5,159.5 L1803,168 L1818.5,151.5" fill="none" stroke="#f4fbe8" stroke-width="5" stroke-linecap="butt"/><path d="M1801.2,157 V178 L1806,173.8 L1810.5,183.5 L1814.3,181.8 L1810,172.5 L1816.5,172.3 Z" fill="#fff" stroke="#1a1a1a" stroke-width="1.3" stroke-linejoin="round"/><rect x="16.1" y="989.4" width="3.2" height="20.8" fill="#4e4e4e"/><path d="M20.3,1000 L34.4,990.4 V1009.7 Z" fill="#4e4e4e"/><path d="M53.1,999.8 L67.7,990.4 V1009.3 Z" fill="#4e4e4e"/><rect x="69.3" y="995.1" width="2.6" height="8.9" fill="#4e4e4e"/><path d="M91.1,988.3 L109.4,1000 L91.1,1011.8 Z" fill="#4e4e4e"/><rect x="127.6" y="995.1" width="2.6" height="8.9" fill="#4e4e4e"/><path d="M131.8,990.4 L146.9,1000 L131.8,1009.5 Z" fill="#4e4e4e"/><path d="M166.1,990.4 L181.3,1000 L166.1,1009.5 Z" fill="#4e4e4e"/><rect x="181.3" y="989.2" width="3.1" height="20.9" fill="#4e4e4e"/><path d="M220.0,987.5 H240.0 V1003.5 M220.0,987.5 V1007.5 H234.0" fill="none" stroke="#5a5a5a" stroke-width="1.1" stroke-dasharray="2,1"/><rect x="218.6" y="986.1" width="2.8" height="2.8" fill="#3b8ccc"/><rect x="238.6" y="986.1" width="2.8" height="2.8" fill="#3b8ccc"/><rect x="218.6" y="1006.1" width="2.8" height="2.8" fill="#3b8ccc"/><path d="M233.0,1009.0 L242.0,999.5" stroke="#f0b84a" stroke-width="4"/><path d="M241.0,1000.5 L243.5,998.0" stroke="#e03040" stroke-width="4"/><path d="M231.5,1010.0 L233.5,1008.0" stroke="#444" stroke-width="1.5"/><path d="M255.0,990 H268.0 V1007 H255.0 Z" fill="#5aaee4"/><path d="M255.0,990 L259.0,986 H272.0 L268.0,990 Z" fill="#8cc8ef"/><path d="M268.0,990 L272.0,986 V1003 L268.0,1007 Z" fill="#3a8ccc"/><path d="M255.0,1007 V1010 H268.0 L272.0,1006 V1003 L268.0,1007 Z" fill="#c9d6e2"/><path d="M276.5,989 V1007" stroke="#222" stroke-width="1.6"/><path d="M276.5,986.5 L273.8,991.5 L279.2,991.5 Z" fill="#222"/><path d="M292.3,987.5 H312.3 V1003.5 M292.3,987.5 V1007.5 H306.3" fill="none" stroke="#5a5a5a" stroke-width="1.1" stroke-dasharray="2,1"/><rect x="290.9" y="986.1" width="2.8" height="2.8" fill="#3b8ccc"/><rect x="310.9" y="986.1" width="2.8" height="2.8" fill="#3b8ccc"/><rect x="290.9" y="1006.1" width="2.8" height="2.8" fill="#3b8ccc"/><path d="M305.3,1009.0 L314.3,999.5" stroke="#f0b84a" stroke-width="4"/><path d="M313.3,1000.5 L315.8,998.0" stroke="#e03040" stroke-width="4"/><path d="M303.8,1010.0 L305.8,1008.0" stroke="#444" stroke-width="1.5"/><path d="M327.0,990 H340.0 V1007 H327.0 Z" fill="#5aaee4"/><path d="M327.0,990 L331.0,986 H344.0 L340.0,990 Z" fill="#8cc8ef"/><path d="M340.0,990 L344.0,986 V1003 L340.0,1007 Z" fill="#3a8ccc"/><path d="M327.0,1007 V1010 H340.0 L344.0,1006 V1003 L340.0,1007 Z" fill="#c9d6e2"/><path d="M348.5,989 V1007" stroke="#222" stroke-width="1.6"/><path d="M348.5,986.5 L345.8,991.5 L351.2,991.5 Z" fill="#222"/><path d="M366.2,997.5 H382.2 M374.2,989.5 V1005.5" stroke="#2a2a2a" stroke-width="2"/><path d="M384.7,997.5 L380.2,1001.5 L380.2,993.5 Z" fill="#2a2a2a"/><path d="M363.7,997.5 L368.2,993.5 L368.2,1001.5 Z" fill="#2a2a2a"/><path d="M374.2,1008.0 L370.2,1003.5 L378.2,1003.5 Z" fill="#2a2a2a"/><path d="M374.2,987.0 L378.2,991.5 L370.2,991.5 Z" fill="#2a2a2a"/><rect x="399.5" y="987" width="11" height="11.5" rx="4" fill="#f4f4f4" stroke="#333" stroke-width="1.4"/><rect x="411" y="998" width="11.3" height="12" rx="4" fill="#f4f4f4" stroke="#333" stroke-width="1.4"/><rect x="403" y="991.5" width="4" height="3" fill="#aaa"/><rect x="414.6" y="1003" width="4" height="3" fill="#aaa"/><path d="M401.8,999.5 V1005 H407.5" fill="none" stroke="#2a7ec4" stroke-width="1.8"/><path d="M410,1005 L406.5,1002 V1008 Z" fill="#2a7ec4"/><path d="M438.7,997.5 H454.7 M446.7,989.5 V1005.5" stroke="#2a2a2a" stroke-width="2"/><path d="M457.2,997.5 L452.7,1001.5 L452.7,993.5 Z" fill="#2a2a2a"/><path d="M436.2,997.5 L440.7,993.5 L440.7,1001.5 Z" fill="#2a2a2a"/><path d="M446.7,1008.0 L442.7,1003.5 L450.7,1003.5 Z" fill="#2a2a2a"/><path d="M446.7,987.0 L450.7,991.5 L442.7,991.5 Z" fill="#2a2a2a"/><path d="M472.0,987.5 H492.0 V1003.5 M472.0,987.5 V1007.5 H486.0" fill="none" stroke="#5a5a5a" stroke-width="1.1" stroke-dasharray="2,1"/><rect x="470.6" y="986.1" width="2.8" height="2.8" fill="#3b8ccc"/><rect x="490.6" y="986.1" width="2.8" height="2.8" fill="#3b8ccc"/><rect x="470.6" y="1006.1" width="2.8" height="2.8" fill="#3b8ccc"/><path d="M485.0,1009.0 L494.0,999.5" stroke="#f0b84a" stroke-width="4"/><path d="M493.0,1000.5 L495.5,998.0" stroke="#e03040" stroke-width="4"/><path d="M483.5,1010.0 L485.5,1008.0" stroke="#444" stroke-width="1.5"/><path d="M231.7,1023.3 H483.3" stroke="#c9c9c9" stroke-width="2.6"/><path d="M231.7,1014.5 V1023" stroke="#c9c9c9" stroke-width="2"/><path d="M267.0,1014.5 V1023" stroke="#c9c9c9" stroke-width="2"/><path d="M302.5,1014.5 V1023" stroke="#c9c9c9" stroke-width="2"/><path d="M338.0,1014.5 V1023" stroke="#c9c9c9" stroke-width="2"/><path d="M374.5,1014.5 V1023" stroke="#c9c9c9" stroke-width="2"/><path d="M411.0,1014.5 V1023" stroke="#c9c9c9" stroke-width="2"/><path d="M446.5,1014.5 V1023" stroke="#c9c9c9" stroke-width="2"/><path d="M483.3,1014.5 V1023" stroke="#c9c9c9" stroke-width="2"/><path d="M491.7,976.7 H510 V981.5 L503,989.5 V1025 H498.8 V989.5 L491.7,981.5 Z" fill="#575757"/><g fill="#8e8e8e"><circle cx="1888.6" cy="999.6" r="9.6"/><rect x="1885.9" y="987.4" width="5.4" height="6" transform="rotate(0 1888.6 999.6)"/><rect x="1885.9" y="987.4" width="5.4" height="6" transform="rotate(45 1888.6 999.6)"/><rect x="1885.9" y="987.4" width="5.4" height="6" transform="rotate(90 1888.6 999.6)"/><rect x="1885.9" y="987.4" width="5.4" height="6" transform="rotate(135 1888.6 999.6)"/><rect x="1885.9" y="987.4" width="5.4" height="6" transform="rotate(180 1888.6 999.6)"/><rect x="1885.9" y="987.4" width="5.4" height="6" transform="rotate(225 1888.6 999.6)"/><rect x="1885.9" y="987.4" width="5.4" height="6" transform="rotate(270 1888.6 999.6)"/><rect x="1885.9" y="987.4" width="5.4" height="6" transform="rotate(315 1888.6 999.6)"/></g><circle cx="1888.6" cy="999.6" r="3.8" fill="#f2f2f2"/></svg></body></html>
